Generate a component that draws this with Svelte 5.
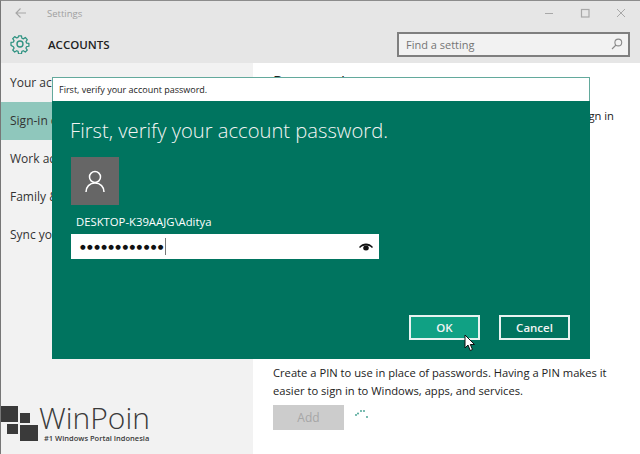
<svelte:options runes={true} />

<script>
const navItems = [
    { label: 'Your account', selected: false },
    { label: 'Sign-in options', selected: true },
    { label: 'Work access', selected: false },
    { label: 'Family & other users', selected: false },
    { label: 'Sync your settings', selected: false }
];
const spinnerDots = [
    [1, 6], [3, 4.5], [6, 2], [9, 2], [12, 8]
];
</script>

<div class="window">
    <header class="header">
        <div class="titlebar">
            <svg class="back" width="11" height="10" viewBox="0 0 11 10" fill="none" stroke="#a5a5a5" stroke-width="1.1">
                <path d="M11 5H1M5.500 .5L1 5l4.500 4.500" />
            </svg>
            <span class="app-name">Settings</span>
            <div class="controls">
                <svg width="10" height="10" viewBox="0 0 10 10" stroke="#a8a8a8" fill="none"><path d="M1 5.500h8" /></svg>
                <svg width="10" height="10" viewBox="0 0 10 10" stroke="#a8a8a8" fill="none" stroke-width="1.2"><rect x="1.500" y="1.500" width="7.500" height="7.500" /></svg>
                <svg width="10" height="10" viewBox="0 0 10 10" stroke="#a8a8a8" fill="none"><path d="M1 1l8 8M9 1L1 9" /></svg>
            </div>
        </div>
        <div class="pagebar">
            <svg class="gear" width="20" height="20" viewBox="0 0 20 20" fill="none" stroke="#2f9382" stroke-width="1.4" stroke-linejoin="round">
                <circle cx="10" cy="10" r="3" />
                <path d="M8.400 1h3.200l.5 2.600 1.600.7 2.200-1.500 2.200 2.300-1.500 2.200.7 1.600 2.600.4v3.200l-2.600.5-.7 1.500 1.500 2.200-2.200 2.300-2.200-1.500-1.600.7-.5 2.700H8.400l-.5-2.700-1.600-.7-2.200 1.500-2.200-2.300 1.500-2.200-.7-1.500L0 11.500V8.300l2.700-.4.700-1.600-1.500-2.200 2.200-2.300 2.200 1.500 1.600-.7z" transform="translate(1 1) scale(.9)" />
            </svg>
            <h1>ACCOUNTS</h1>
            <div class="search">
                <span>Find a setting</span>
                <svg width="12" height="12" viewBox="0 0 12 12" fill="none" stroke="#8a8a8a" stroke-width="1.100">
                    <circle cx="7.300" cy="4.500" r="3.400" /><path d="M5 7L1 11" />
                </svg>
            </div>
        </div>
    </header>

    <div class="main">
        <nav class="sidebar">
            {#each navItems as item}
                <div class="nav-item" class:selected={item.selected}>{item.label}</div>
            {/each}
        </nav>
        <section class="content">
            <h2>Password</h2>
            <p class="pw-text">Change your account password, which is what you use to sign in</p>
            <p class="pin-text">Create a PIN to use in place of passwords. Having a PIN makes it easier to sign in to Windows, apps, and services.</p>
            <div class="add-row">
                <button class="add">Add</button>
                <svg class="spinner" width="14" height="10" viewBox="0 0 14 10" fill="#3d9d8c">
                    {#each spinnerDots as dot}
                        <circle cx={dot[0]} cy={dot[1]} r="0.9" />
                    {/each}
                </svg>
            </div>
        </section>
    </div>

    <div class="dialog">
        <div class="dialog-title">First, verify your account password.</div>
        <div class="dialog-body">
            <div class="dialog-heading">First, verify your account password.</div>
            <div class="avatar">
                <svg width="20" height="23" viewBox="0 0 20 23" fill="none" stroke="#fff" stroke-width="1.500">
                    <circle cx="10" cy="7" r="5.500" />
                    <path d="M1 22c0-5 3.500-9 9-9s9 4 9 9" />
                </svg>
            </div>
            <div class="username">DESKTOP-K39AAJG\Aditya</div>
            <div class="password">
                <span class="dots">●●●●●●●●●●●●</span>
                <span class="caret"></span>
                <svg class="eye" width="14" height="8" viewBox="0 0 14 8" fill="#111">
                    <path d="M0 4C2 1.500 4.500 .5 7 .5s5 1 7 3.500l-1 1C11 3 9 2.400 7 2.400S3 3 1 5z" />
                    <ellipse cx="7" cy="5" rx="2.800" ry="2.500" />
                </svg>
            </div>
            <div class="actions">
                <button class="ok">OK</button>
                <button class="cancel">Cancel</button>
            </div>
            <svg class="cursor" width="12" height="18" viewBox="0 0 12 18">
                <path d="M1 1v13l3-3 2.200 5.500 2.300-1L6.300 10.500H10.500z" fill="#fff" stroke="#111" stroke-width="1" />
            </svg>
        </div>
    </div>

    <div class="watermark">
        <div class="squares">
            <span class="sq a"></span><span class="sq b"></span><span class="sq c"></span><span class="sq d"></span>
        </div>
        <div class="brand">
            <div class="brand-name">WinPoin</div>
            <div class="brand-sub">#1 Windows Portal Indonesia</div>
        </div>
    </div>
</div>

<style>
:global(body) {
    margin: 0;
    background: #f2f2f2;
}
.window {
    position: relative;
    width: 640px;
    height: 454px;
    overflow: hidden;
    box-sizing: border-box;
    border-top: 1px solid #8c8c8c;
    border-left: 1px solid #777;
    font-family: "Open Sans", "Noto Sans", sans-serif;
    color: #222;
    display: flex;
    flex-direction: column;
}
.header {
    background: #e6e6e6;
    height: 62px;
    flex: none;
}
.titlebar {
    display: flex;
    align-items: center;
    height: 24px;
    padding-left: 14px;
}
.back {
    margin-right: 21px;
}
.app-name {
    font-size: 9.500px;
    color: #a0a0a0;
}
.controls {
    margin-left: auto;
    display: flex;
    gap: 26px;
    padding-right: 14px;
}
.pagebar {
    display: flex;
    align-items: center;
    height: 38px;
    padding: 0 10px 0 9px;
}
.gear {
    margin-right: 18px;
}
h1 {
    margin: 0;
    font-size: 11.500px;
    font-weight: 600;
    color: #222;
}
.search {
    margin-left: auto;
    width: 233px;
    height: 25px;
    box-sizing: border-box;
    border: 2px solid #7f7f7f;
    background: #f2f2f2;
    display: flex;
    align-items: center;
    justify-content: space-between;
    padding: 0 5px 0 7px;
    font-size: 11px;
    color: #757575;
}
.main {
    flex: 1;
    display: flex;
}
.sidebar {
    width: 252px;
    background: #f2f2f2;
    padding-top: 1px;
}
.nav-item {
    height: 38px;
    line-height: 38px;
    padding-left: 9px;
    font-size: 12px;
    color: #333;
    white-space: nowrap;
}
.nav-item.selected {
    background: #8fc7bc;
}
.content {
    flex: 1;
    background: #fff;
    padding: 8px 0 0 20px;
}
h2 {
    margin: 0;
    font-size: 16px;
    font-weight: 400;
    line-height: 22px;
}
.pw-text {
    margin: 14px 0 0;
    width: 341px;
    font-size: 11.200px;
    line-height: 18px;
    white-space: nowrap;
    text-align: right;
}
.pin-text {
    margin: 239px 0 0;
    width: 345px;
    font-size: 11.200px;
    line-height: 18px;
}
.add-row {
    display: flex;
    align-items: flex-start;
    margin-top: 5px;
}
.add {
    width: 71px;
    height: 25px;
    border: none;
    background: #ccc;
    color: #a6a6a6;
    font: 400 12px "Open Sans", sans-serif;
    padding: 0;
}
.spinner {
    margin: 4px 0 0 11px;
}
.dialog {
    position: absolute;
    left: 51px;
    top: 76px;
    width: 538px;
    height: 282px;
    display: flex;
    flex-direction: column;
}
.dialog-title {
    height: 24px;
    box-sizing: border-box;
    background: #fff;
    border: 1px solid #63a99c;
    border-bottom: none;
    font-size: 9px;
    line-height: 23px;
    padding-left: 6px;
    color: #222;
}
.dialog-body {
    position: relative;
    flex: 1;
    background: #00745f;
    padding: 15px 19px 0;
    color: #fff;
}
.dialog-heading {
    margin-left: -1px;
    font-size: 20.200px;
    font-weight: 300;
    line-height: 28px;
    color: #f4f4f4;
}
.avatar {
    margin-top: 13px;
    width: 48px;
    height: 48px;
    background: #666;
    display: flex;
    align-items: center;
    justify-content: center;
}
.username {
    margin-top: 8px;
    padding-left: 5px;
    font-size: 11.300px;
    line-height: 18px;
}
.password {
    margin-top: 3px;
    width: 308px;
    height: 25px;
    background: #fff;
    display: flex;
    align-items: center;
    padding-left: 9px;
    box-sizing: border-box;
    color: #111;
}
.dots {
    font-size: 6.500px;
    letter-spacing: 1.400px;
    font-family: "DejaVu Sans", sans-serif;
}
.caret {
    width: 1px;
    height: 17px;
    background: #777;
}
.eye {
    margin-left: auto;
    margin-right: 6px;
}
.actions {
    position: absolute;
    right: 20px;
    bottom: 19px;
    display: flex;
    gap: 19px;
}
button {
    box-sizing: border-box;
}
.actions button {
    width: 71px;
    height: 25px;
    border: 2px solid #e8f3f1;
    color: #f4f4f4;
    font: 600 11.500px "Open Sans", sans-serif;
    padding: 0;
}
.ok {
    background: #10a184;
}
.cancel {
    background: #00745f;
}
.cursor {
    position: absolute;
    left: 412px;
    top: 233px;
}
.watermark {
    position: absolute;
    left: -1px;
    top: 403px;
    display: flex;
    color: #3a3a3a;
}
.squares {
    position: relative;
    width: 39px;
    height: 40px;
}
.sq {
    position: absolute;
    background: #3a3a3a;
}
.a { left: 0; top: 2px; width: 18px; height: 16px; }
.b { left: 20px; top: 9px; width: 10px; height: 10px; }
.c { left: 7px; top: 20px; width: 11px; height: 10px; }
.d { left: 20px; top: 21px; width: 18px; height: 16px; }
.brand-name {
    margin-top: -1px;
    font-family: "Open Sans", sans-serif;
    font-weight: 300;
    font-size: 30px;
    line-height: 30px;
}
.brand-sub {
    font-size: 7.500px;
    font-weight: 600;
    line-height: 10px;
    padding-left: 5px;
    white-space: nowrap;
}
</style>
